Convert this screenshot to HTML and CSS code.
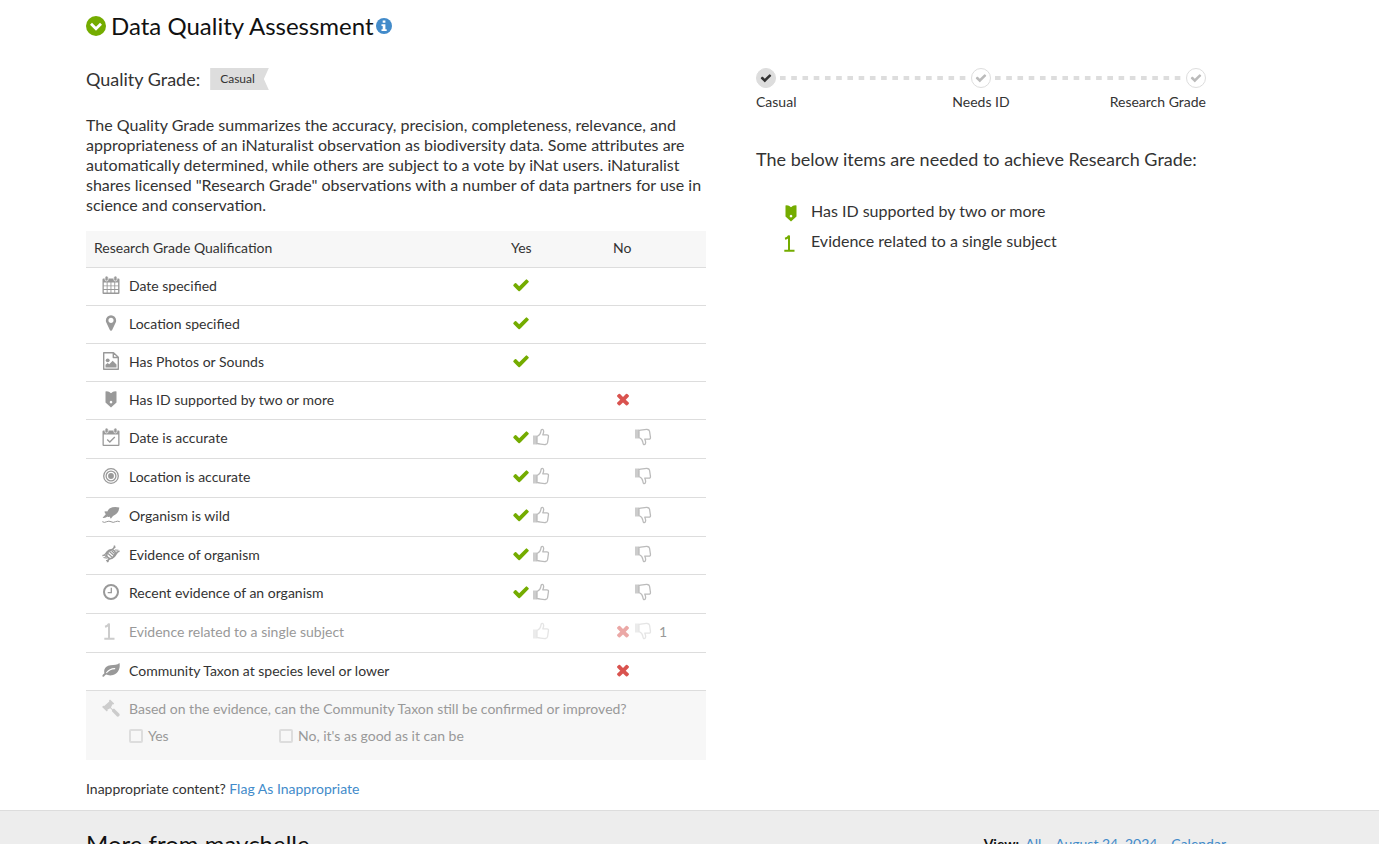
FILE: index.html
```
<!DOCTYPE html>
<html lang="en">
<head>
    <meta charset="UTF-8">
    <meta name="viewport" content="width=device-width, initial-scale=1.0">
    <title>Data Quality Assessment</title>
    <link rel="stylesheet" href="styles.css">
</head>
<body>
    <!-- icon shapes, used below with <use> -->
    <svg class="sprite" aria-hidden="true">
        <symbol id="check" viewBox="0 0 1792 1792"><path d="M1671 566q0 40-28 68l-724 724-136 136q-28 28-68 28t-68-28l-136-136-362-362q-28-28-28-68t28-68l136-136q28-28 68-28t68 28l294 295 656-657q28-28 68-28t68 28l136 136q28 28 28 68z"/></symbol>
        <symbol id="times" viewBox="0 0 1792 1792"><path d="M1490 1322q0 40-28 68l-136 136q-28 28-68 28t-68-28l-294-294-294 294q-28 28-68 28t-68-28l-136-136q-28-28-28-68t28-68l294-294-294-294q-28-28-28-68t28-68l136-136q28-28 68-28t68 28l294 294 294-294q28-28 68-28t68 28l136 136q28 28 28 68t-28 68l-294 294 294 294q28 28 28 68z"/></symbol>
        <symbol id="thumb" viewBox="0 0 18 18">
            <path d="M1 7.500h4v9h-4z" opacity=".75"/>
            <path d="M5 8.500C7.500 7.500 8.600 5.500 8.900 3.500C9.100 1.600 9.700 1.300 10.400 1.400C12 1.700 12 4.200 10.800 6.800H14.800C16.200 6.800 16.700 7.800 16.400 9L15.600 14.500C15.400 15.800 14.800 16.400 13.500 16.500C10.500 16.800 8.500 15.800 5 15.500z" fill="none" stroke="currentColor" stroke-width="1.300" stroke-linejoin="round"/>
        </symbol>
        <symbol id="calendar" viewBox="0 0 18 18">
            <path fill-rule="evenodd" d="M1.500 2.500h15q1 0 1 1v13.500q0 1-1 1h-15q-1 0-1-1V3.500q0-1 1-1zM1.800 6.500v2.900h2.900V6.500zM5.600 6.500v2.900h2.900V6.500zM9.400 6.500v2.900h2.900V6.500zM13.200 6.500v2.900h2.900V6.500zM1.800 10.300v2.700h2.900v-2.700zM5.600 10.300v2.700h2.900v-2.700zM9.400 10.300v2.700h2.900v-2.700zM13.200 10.300v2.700h2.900v-2.700zM1.800 13.900v2.700h2.900v-2.700zM5.600 13.900v2.700h2.900v-2.700zM9.400 13.900v2.700h2.900v-2.700zM13.200 13.900v2.700h2.900v-2.700z"/>
            <rect x="3" y="0" width="3.200" height="5" rx="1.600" stroke="#fff" stroke-width=".7"/><rect x="11.800" y="0" width="3.200" height="5" rx="1.600" stroke="#fff" stroke-width=".7"/>
        </symbol>
        <symbol id="marker" viewBox="0 0 1792 1792"><path d="M1152 640q0-106-75-181t-181-75-181 75-75 181 75 181 181 75 181-75 75-181zm256 0q0 109-33 179l-364 774q-16 33-47.500 52t-67.500 19-67.500-19-46.500-52l-365-774q-33-70-33-179 0-212 150-362t362-150 362 150 150 362z"/></symbol>
        <symbol id="photo" viewBox="0 0 18 18">
            <path d="M1.700 .7H11.500L16.300 5.300V17.300H1.700zM11.300 .9V5.500H16.200" fill="none" stroke="currentColor" stroke-width="1.400" stroke-linejoin="round"/>
            <circle cx="5.700" cy="8.300" r="1.900"/><path d="M3.500 15.500v-2.800l2.200-1.800 1.500 1.400 3.500-3.500 3.800 3.700v3z"/>
        </symbol>
        <symbol id="shield" viewBox="0 0 18 18"><path fill-rule="evenodd" d="M3.500 1.500Q6.500 .8 9 3.200Q11.500 .8 14.500 1.500V12.500L9 17.500L3.500 12.500zM9 10.800a1.300 1.300 0 1 0 .01 0z"/></symbol>
        <symbol id="calendar-check" viewBox="0 0 18 18">
            <path fill-rule="evenodd" d="M1.500 2.500h15q1 0 1 1v13.500q0 1-1 1h-15q-1 0-1-1V3.500q0-1 1-1zM1.800 6.500v10.200h14.400V6.500z"/>
            <rect x="3" y="0" width="3.200" height="5" rx="1.600" stroke="#fff" stroke-width=".7"/><rect x="11.800" y="0" width="3.200" height="5" rx="1.600" stroke="#fff" stroke-width=".7"/>
            <path d="M5.200 11.500l2.600 2.500 5-5" fill="none" stroke="currentColor" stroke-width="1.300"/>
        </symbol>
        <symbol id="target" viewBox="0 0 18 18"><g fill="none" stroke="currentColor" stroke-width="1.300"><circle cx="9" cy="9" r="7.300"/><circle cx="9" cy="9" r="4.900"/></g><circle cx="9" cy="9" r="2.900"/></symbol>
        <symbol id="wild" viewBox="0 0 18 18">
            <path d="M17.300 1.500Q11.500 .3 8 2.300Q6 3.500 5.300 5.500Q3.500 4.700 2.300 5.700L3.800 8.300L.6 11.800Q3.500 12.300 5.500 10.500Q6.500 11.500 7.500 10.500L8.800 12.800L11 10Q16.800 7.500 17.300 1.500z"/>
            <path d="M.3 15.700q2.200 1.400 4.400 0q2.200-1 4.300 0q2.200 1.400 4.400 0q2.200-1 4.400 0" fill="none" stroke="currentColor"/>
        </symbol>
        <symbol id="dna" viewBox="0 0 18 18">
            <path d="M.4 10.500C3 11 3.500 8.500 5.500 6.500S10.500 4 12.500 6S12 11.500 10 13S5.500 13 5.500 17.300M17.600 6.200C15 6 14.500 9 12 11.800S7.500 14 5.500 12S5.500 7 8.500 5.300S12.500 4 12.500 .6" fill="none" stroke="currentColor" stroke-width="1.500"/>
            <path d="M6 8.500l5 4.500M7.500 6.500l5 4.500M9.500 5.500l3 3M1.500 12.500l4 .7M13 5l3.500 .2M13.500 7l2.500 .2M2.500 10l2 2M11 3.800l2.500-2M4 15.500l3 .5" stroke="currentColor" stroke-width="1.100"/>
        </symbol>
        <symbol id="clock" viewBox="0 0 18 18"><circle cx="9" cy="9" r="7" fill="none" stroke="currentColor" stroke-width="2"/><path d="M9.300 4.800v4.900H5.700" fill="none" stroke="currentColor" stroke-width="1.300"/></symbol>
        <symbol id="leaf" viewBox="0 0 18 18">
            <path d="M17.500 2C18.600 7.500 16 13 10 14.300C7.300 14.800 5.500 14 4.200 13.500Q3 14 2 15.600Q1 16.300 .3 15Q.3 14 2.400 12.300C1.300 7.500 4.500 4.700 8.500 4.300C12.500 4 15 4.200 17.500 2z"/>
            <path d="M4.700 11.500Q7.500 7.800 12.700 7.600" fill="none" stroke="#fff" stroke-width="1.200" stroke-linecap="round"/>
        </symbol>
        <symbol id="gavel" viewBox="0 0 18 18"><path d="M8 .4L12.200 4.600L11.300 5.600L10.500 5.300L8.900 8.500L10.700 10.300L12 9.500L17.600 15Q18 17.600 15.300 17.700L9.900 12.300L10 11L8.200 9.300L5.300 10.800L5.800 11.600L4.800 12.600L.1 7.900L1.200 6.800L2.200 7.100L7.300 2.400L7 1.400z"/></symbol>
        <symbol id="one" viewBox="0 0 18 18"><path d="M3 4.800Q6.300 4 7 1.500V16.500M2.300 16.800H12.500" fill="none" stroke="currentColor" stroke-width="2"/></symbol>
    </svg>

    <main class="container quality">
        <section class="assessment">
            <h2>
                <svg class="toggle" viewBox="0 0 20 20"><circle cx="10" cy="10" r="10"/><path d="M5 7.800l5 5 5-5" fill="none" stroke="#fff" stroke-width="2.800"/></svg>
                Data Quality Assessment<svg class="info" viewBox="0 0 16 16"><circle cx="8" cy="8" r="8"/><path d="M6.700 2.500h2.700v2.200H6.700zM5.500 6.200h3.900v5h1.300v1.800H5.500v-1.800h1.200V8H5.500z" fill="#fff"/></svg>
            </h2>
            <div class="grade">Quality Grade: <span class="tag">Casual</span></div>
            <p class="summary">The Quality Grade summarizes the accuracy, precision, completeness, relevance, and appropriateness of an iNaturalist observation as biodiversity data. Some attributes are automatically determined, while others are subject to a vote by iNat users. iNaturalist shares licensed "Research Grade" observations with a number of data partners for use in science and conservation.</p>

            <table>
                <thead>
                    <tr><th>Research Grade Qualification</th><th class="vote">Yes</th><th class="vote">No</th></tr>
                </thead>
                <tbody>
                    <tr>
                        <td><div class="name"><svg><use href="#calendar"/></svg>Date specified</div></td>
                        <td><div class="marks"><svg class="pass"><use href="#check"/></svg></div></td>
                        <td></td>
                    </tr>
                    <tr>
                        <td><div class="name"><svg><use href="#marker"/></svg>Location specified</div></td>
                        <td><div class="marks"><svg class="pass"><use href="#check"/></svg></div></td>
                        <td></td>
                    </tr>
                    <tr>
                        <td><div class="name"><svg><use href="#photo"/></svg>Has Photos or Sounds</div></td>
                        <td><div class="marks"><svg class="pass"><use href="#check"/></svg></div></td>
                        <td></td>
                    </tr>
                    <tr>
                        <td><div class="name"><svg><use href="#shield"/></svg>Has ID supported by two or more</div></td>
                        <td></td>
                        <td><div class="marks"><svg class="fail"><use href="#times"/></svg></div></td>
                    </tr>
                    <tr class="votable">
                        <td><div class="name"><svg><use href="#calendar-check"/></svg>Date is accurate</div></td>
                        <td><div class="marks"><svg class="pass"><use href="#check"/></svg><button type="button" aria-label="Yes"><svg><use href="#thumb"/></svg></button></div></td>
                        <td><div class="marks"><span class="blank"></span><button type="button" class="down" aria-label="No"><svg><use href="#thumb"/></svg></button></div></td>
                    </tr>
                    <tr class="votable">
                        <td><div class="name"><svg><use href="#target"/></svg>Location is accurate</div></td>
                        <td><div class="marks"><svg class="pass"><use href="#check"/></svg><button type="button" aria-label="Yes"><svg><use href="#thumb"/></svg></button></div></td>
                        <td><div class="marks"><span class="blank"></span><button type="button" class="down" aria-label="No"><svg><use href="#thumb"/></svg></button></div></td>
                    </tr>
                    <tr class="votable">
                        <td><div class="name"><svg><use href="#wild"/></svg>Organism is wild</div></td>
                        <td><div class="marks"><svg class="pass"><use href="#check"/></svg><button type="button" aria-label="Yes"><svg><use href="#thumb"/></svg></button></div></td>
                        <td><div class="marks"><span class="blank"></span><button type="button" class="down" aria-label="No"><svg><use href="#thumb"/></svg></button></div></td>
                    </tr>
                    <tr>
                        <td><div class="name"><svg><use href="#dna"/></svg>Evidence of organism</div></td>
                        <td><div class="marks"><svg class="pass"><use href="#check"/></svg><button type="button" aria-label="Yes"><svg><use href="#thumb"/></svg></button></div></td>
                        <td><div class="marks"><span class="blank"></span><button type="button" class="down" aria-label="No"><svg><use href="#thumb"/></svg></button></div></td>
                    </tr>
                    <tr class="votable">
                        <td><div class="name"><svg><use href="#clock"/></svg>Recent evidence of an organism</div></td>
                        <td><div class="marks"><svg class="pass"><use href="#check"/></svg><button type="button" aria-label="Yes"><svg><use href="#thumb"/></svg></button></div></td>
                        <td><div class="marks"><span class="blank"></span><button type="button" class="down" aria-label="No"><svg><use href="#thumb"/></svg></button></div></td>
                    </tr>
                    <tr class="votable disabled">
                        <td><div class="name"><svg><use href="#one"/></svg>Evidence related to a single subject</div></td>
                        <td><div class="marks"><span class="blank"></span><button type="button" aria-label="Yes"><svg><use href="#thumb"/></svg></button></div></td>
                        <td><div class="marks"><svg class="fail"><use href="#times"/></svg><button type="button" class="down" aria-label="No"><svg><use href="#thumb"/></svg></button><span class="count">1</span></div></td>
                    </tr>
                    <tr>
                        <td><div class="name"><svg><use href="#leaf"/></svg>Community Taxon at species level or lower</div></td>
                        <td></td>
                        <td><div class="marks"><svg class="fail"><use href="#times"/></svg></div></td>
                    </tr>
                    <tr class="improve disabled">
                        <td colspan="3">
                            <div class="name"><svg><use href="#gavel"/></svg>Based on the evidence, can the Community Taxon still be confirmed or improved?</div>
                            <div class="options">
                                <label><input type="checkbox" disabled>Yes</label>
                                <label><input type="checkbox" disabled>No, it's as good as it can be</label>
                            </div>
                        </td>
                    </tr>
                </tbody>
            </table>

            <p class="flag">Inappropriate content? <a href="#">Flag As Inappropriate</a></p>
        </section>

        <aside class="progress">
            <div class="track">
                <span class="dot current"><svg><use href="#check"/></svg></span>
                <span class="dashes"></span>
                <span class="dot"><svg><use href="#check"/></svg></span>
                <span class="dashes"></span>
                <span class="dot"><svg><use href="#check"/></svg></span>
            </div>
            <div class="labels"><span>Casual</span><span>Needs ID</span><span>Research Grade</span></div>
            <h3>The below items are needed to achieve Research Grade:</h3>
            <ul>
                <li><svg><use href="#shield"/></svg>Has ID supported by two or more</li>
                <li><svg><use href="#one"/></svg>Evidence related to a single subject</li>
            </ul>
        </aside>
    </main>

    <section class="more">
        <div class="container more-head">
            <h2>More from maychelle</h2>
            <div class="view"><b>View:</b> <a href="#">All</a> · <a href="#">August 24, 2024</a> · <a href="#">Calendar</a></div>
        </div>
    </section>
</body>
</html>
```
FILE: styles.css
```
* {
    box-sizing: border-box;
}
body {
    margin: 0;
    height: 100vh;
    overflow: hidden;
    font-family: Lato, sans-serif;
    font-size: 14px;
    line-height: 20px;
    color: #333;
    background: #fff;
}
svg {
    fill: currentColor;
    flex: none;
}
.sprite {
    display: none;
}
a {
    color: #428bca;
    text-decoration: none;
}
h2, h3, p, ul {
    margin: 0;
    padding: 0;
    font-weight: 400;
}
.container {
    max-width: 1226px;
    padding-left: 86px;
}
.quality {
    display: grid;
    grid-template-columns: minmax(0, 620px) minmax(0, 450px);
    column-gap: 50px;
}
h2 {
    font-size: 24px;
    line-height: 30px;
    color: #111;
}
.assessment {
    padding-top: 11px;
}
.assessment h2 {
    display: flex;
    align-items: center;
}
.toggle {
    width: 20px;
    height: 20px;
    margin-right: 5px;
    color: #74ac00;
}
.info {
    width: 16px;
    height: 16px;
    margin-left: 2px;
    color: #428bca;
}
.grade {
    display: flex;
    align-items: center;
    height: 22px;
    margin-top: 27px;
    font-size: 18px;
}
.tag {
    height: 22px;
    margin-left: 10px;
    padding: 0 14px 0 10px;
    font-size: 12px;
    line-height: 22px;
    background: #ddd;
    clip-path: polygon(0 0, 100% 0, calc(100% - 5px) 50%, 100% 100%, 0 100%);
}
.summary {
    margin: 25px 0 16px;
    font-size: 16px;
}

/* qualification table */
table {
    width: 100%;
    table-layout: fixed;
    border-spacing: 0;
}
th {
    height: 37px;
    padding: 0 8px 2px;
    font-weight: 400;
    text-align: left;
    background: #f7f7f7;
    border-bottom: 1px solid #ddd;
}
.vote {
    width: 102px;
}
td {
    height: 38px;
    padding: 0 8px 2px;
    border-bottom: 1px solid #ddd;
}
th + th, td + td {
    padding-left: 9px;
}
.votable td {
    height: 39px;
}
.name, .marks {
    display: flex;
    align-items: center;
}
.name svg {
    width: 18px;
    height: 18px;
    margin: 0 9px 2px 8px;
    color: #999;
}
.marks svg {
    width: 18px;
    height: 18px;
    margin: 0 1px 2px;
}
.marks .blank {
    width: 20px;
}
.marks button {
    display: flex;
    padding: 0;
    border: 0;
    background: none;
    color: #bbb;
    cursor: pointer;
}
.down svg {
    transform: scaleY(-1);
}
.pass {
    color: #74ac00;
}
.fail {
    color: #d9534f;
}
.count {
    margin-left: 6px;
}
.disabled .name, .disabled .count, .disabled label {
    color: #999;
}
.disabled .name svg {
    color: #ccc;
}
.disabled .marks svg {
    opacity: 0.5;
}
.disabled .marks button {
    color: #ccc;
}
.improve td {
    height: 69px;
    padding-bottom: 0;
    background: #f7f7f7;
    border-bottom: 0;
}
.options {
    display: flex;
    margin: 7px 0 6px 35px;
}
.options label {
    display: flex;
    align-items: center;
    min-width: 150px;
}
.options input {
    appearance: none;
    width: 14px;
    height: 14px;
    margin: 0 5px 0 0;
    border: 2px solid #ddd;
    border-radius: 2px;
}
.flag {
    margin: 19px 0 11px;
}

/* grade progress */
.progress {
    padding-top: 68px;
}
.track {
    display: flex;
    align-items: center;
}
.dot {
    display: flex;
    align-items: center;
    justify-content: center;
    width: 20px;
    height: 20px;
    border: 1px solid #ddd;
    border-radius: 50%;
    color: #bbb;
}
.dot svg {
    width: 12px;
    height: 12px;
}
.current {
    background: #ddd;
    color: #333;
}
.dashes {
    flex: 1;
    height: 4px;
    margin: 0 0 0 4px;
    background: linear-gradient(90deg, #ddd 6px, transparent 6px) 0 0 / 11px 4px round;
}
.labels {
    display: grid;
    grid-template-columns: repeat(3, 1fr);
    margin-top: 4px;
}
.labels span:nth-child(2) {
    text-align: center;
}
.labels span:last-child {
    text-align: right;
}
.progress h3 {
    margin-top: 36px;
    font-size: 18px;
    line-height: 22px;
}
.progress ul {
    margin-top: 26px;
    list-style: none;
}
.progress li {
    display: flex;
    align-items: center;
    height: 30px;
    padding-left: 26px;
    font-size: 16px;
}
.progress li svg {
    width: 18px;
    height: 18px;
    margin: 4px 11px 0 0;
    color: #74ac00;
}

/* more observations */
.more {
    height: 200px;
    background: #ededed;
    border-top: 1px solid #ddd;
}
.more-head {
    display: flex;
    align-items: center;
    justify-content: space-between;
    padding-top: 18px;
}
.view b {
    margin-right: 3px;
    color: #111;
}
.view a + a {
    margin-left: 3px;
}
```
